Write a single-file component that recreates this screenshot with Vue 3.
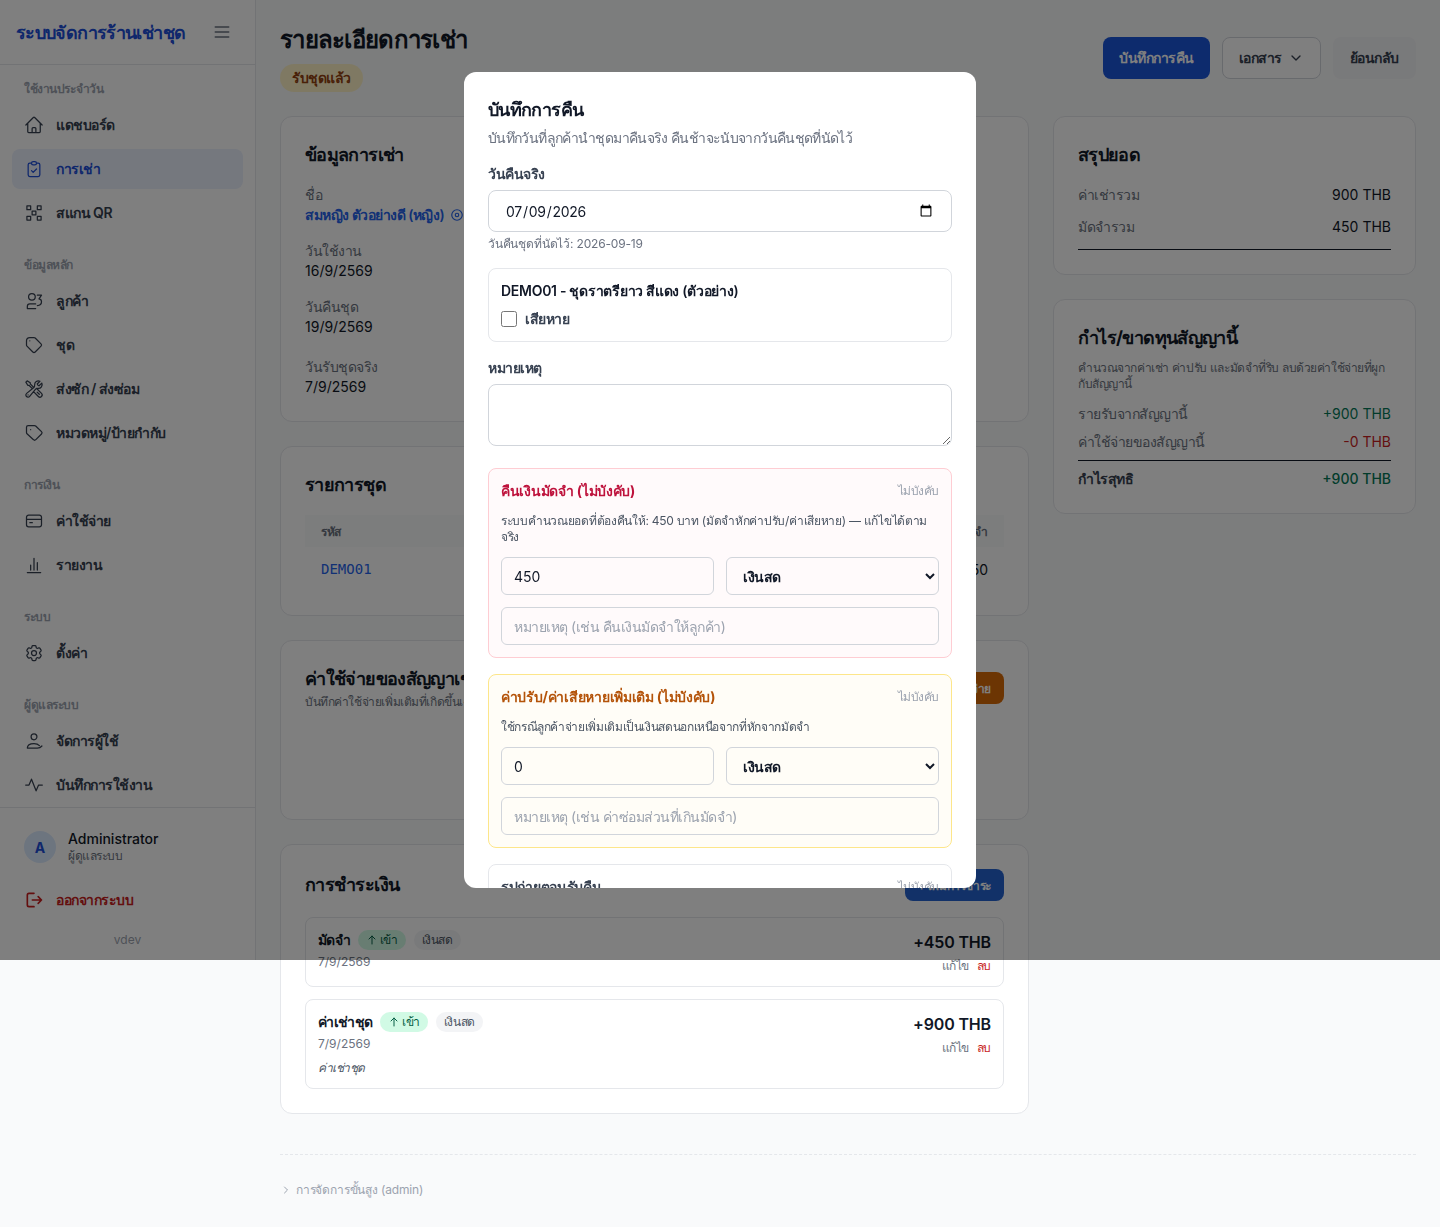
<template>
  <div class="layout">
    <aside class="sidebar">
      <div class="side-head">
        <span class="brand">ระบบจัดการร้านเช่าชุด</span>
        <svg class="menu-icon" viewBox="0 0 24 24" fill="none" stroke="currentColor" stroke-width="2" stroke-linecap="round"><path d="M4 6h16M4 12h16M4 18h16" /></svg>
      </div>
      <nav class="side-nav">
        <div v-for="group in navGroups" :key="group.title" class="nav-group">
          <div class="nav-title">{{ group.title }}</div>
          <a v-for="item in group.items" :key="item.label" class="nav-item" :class="{ active: item.active }">
            <svg viewBox="0 0 24 24" fill="none" stroke="currentColor" stroke-width="1.5" stroke-linecap="round" stroke-linejoin="round"><path :d="icons[item.icon]" /></svg>
            <span>{{ item.label }}</span>
          </a>
        </div>
      </nav>
      <div class="side-foot">
        <div class="user">
          <div class="avatar latin">A</div>
          <div>
            <div class="user-name latin">Administrator</div>
            <div class="user-role">ผู้ดูแลระบบ</div>
          </div>
        </div>
        <a class="logout">
          <svg viewBox="0 0 24 24" fill="none" stroke="currentColor" stroke-width="2" stroke-linecap="round" stroke-linejoin="round"><path d="M12 4H6a2 2 0 0 0-2 2v12a2 2 0 0 0 2 2h6M10 12h11M17 8l4 4-4 4" /></svg>
          <span>ออกจากระบบ</span>
        </a>
        <div class="version latin">vdev</div>
      </div>
    </aside>

    <main class="main">
      <header class="page-head">
        <div>
          <h1>รายละเอียดการเช่า</h1>
          <span class="status">รับชุดแล้ว</span>
        </div>
        <div class="head-actions">
          <button class="btn primary">บันทึกการคืน</button>
          <button class="btn outline">เอกสาร
            <svg viewBox="0 0 24 24" fill="none" stroke="currentColor" stroke-width="2" stroke-linecap="round" stroke-linejoin="round"><path d="m6 9 6 6 6-6" /></svg>
          </button>
          <button class="btn soft">ย้อนกลับ</button>
        </div>
      </header>

      <div class="columns">
        <div class="col">
          <section class="card">
            <h2>ข้อมูลการเช่า</h2>
            <div class="fields">
              <div class="field">
                <div class="f-label">ชื่อ</div>
                <div class="f-value link">สมหญิง ตัวอย่างดี (หญิง)
                  <svg viewBox="0 0 24 24" fill="none" stroke="currentColor" stroke-width="2"><circle cx="12" cy="12" r="9" /><circle cx="12" cy="12" r="3" /></svg>
                </div>
              </div>
              <div class="field">
                <div class="f-label">วันใช้งาน</div>
                <div class="f-value latin">16/9/2569</div>
              </div>
              <div class="field">
                <div class="f-label">วันคืนชุด</div>
                <div class="f-value latin">19/9/2569</div>
              </div>
              <div class="field last">
                <div class="f-label">วันรับชุดจริง</div>
                <div class="f-value latin">7/9/2569</div>
              </div>
            </div>
          </section>

          <section class="card">
            <h2>รายการชุด</h2>
            <table class="items">
              <thead>
                <tr><th>รหัส</th><th>ชื่อชุด</th><th class="num">ค่าเช่า</th><th class="num">มัดจำ</th></tr>
              </thead>
              <tbody>
                <tr>
                  <td class="code">DEMO01</td>
                  <td>ชุดราตรียาว สีแดง (ตัวอย่าง)</td>
                  <td class="num latin">900</td>
                  <td class="num latin">450</td>
                </tr>
              </tbody>
            </table>
          </section>

          <section class="card expense">
            <div class="card-head">
              <div>
                <h2>ค่าใช้จ่ายของสัญญาเช่านี้</h2>
                <p class="sub">บันทึกค่าใช้จ่ายเพิ่มเติมที่เกิดขึ้นเฉพาะกับสัญญานี้</p>
              </div>
              <button class="btn small orange">+ เพิ่มค่าใช้จ่าย</button>
            </div>
          </section>

          <section class="card">
            <div class="card-head center">
              <h2>การชำระเงิน</h2>
              <button class="btn small primary pay-btn">+ เพิ่มการชำระ</button>
            </div>
            <div class="payments">
              <div v-for="pay in payments" :key="pay.title" class="payment">
                <div>
                  <div class="pay-line">
                    <strong>{{ pay.title }}</strong>
                    <span class="tag in">
                      <svg viewBox="0 0 24 24" fill="none" stroke="currentColor" stroke-width="2" stroke-linecap="round" stroke-linejoin="round"><path d="M12 20V4M6 10l6-6 6 6" /></svg>
                      เข้า
                    </span>
                    <span class="tag grey">เงินสด</span>
                  </div>
                  <div class="pay-date latin">7/9/2569</div>
                  <div v-if="pay.note" class="pay-note">{{ pay.note }}</div>
                </div>
                <div class="pay-right">
                  <div class="pay-amount">{{ pay.amount }}</div>
                  <div class="pay-links"><a>แก้ไข</a><a class="del">ลบ</a></div>
                </div>
              </div>
            </div>
          </section>
        </div>

        <div class="col">
          <section class="card">
            <h2>สรุปยอด</h2>
            <div class="rows summary">
              <div class="row"><span class="muted">ค่าเช่ารวม</span><span class="latin">900 THB</span></div>
              <div class="row"><span class="muted">มัดจำรวม</span><span class="latin">450 THB</span></div>
            </div>
            <div class="rule"></div>
          </section>

          <section class="card">
            <h2>กำไร/ขาดทุนสัญญานี้</h2>
            <p class="sub profit-sub">คำนวณจากค่าเช่า ค่าปรับ และมัดจำที่ริบ ลบด้วยค่าใช้จ่ายที่ผูกกับสัญญานี้</p>
            <div class="rows profit">
              <div class="row"><span class="muted">รายรับจากสัญญานี้</span><span class="plus latin">+900 THB</span></div>
              <div class="row"><span class="muted">ค่าใช้จ่ายของสัญญานี้</span><span class="minus latin">-0 THB</span></div>
            </div>
            <div class="rule tight"></div>
            <div class="row"><span class="net">กำไรสุทธิ</span><span class="plus strong latin">+900 THB</span></div>
          </section>
        </div>
      </div>

      <footer class="admin">
        <div class="admin-toggle">
          <svg viewBox="0 0 24 24" fill="none" stroke="currentColor" stroke-width="2" stroke-linecap="round" stroke-linejoin="round"><path d="m9 6 6 6-6 6" /></svg>
          การจัดการขั้นสูง (admin)
        </div>
      </footer>
    </main>

    <div class="overlay">
      <div class="modal">
        <h3>บันทึกการคืน</h3>
        <p class="modal-desc">บันทึกวันที่ลูกค้านำชุดมาคืนจริง คืนช้าจะนับจากวันคืนชุดที่นัดไว้</p>

        <label class="m-label">วันคืนจริง</label>
        <input v-model="returnDate" class="control date" type="date" />
        <div class="hint">วันคืนชุดที่นัดไว้: 2026-09-19</div>

        <div class="box item-box">
          <div class="item-name">DEMO01 - ชุดราตรียาว สีแดง (ตัวอย่าง)</div>
          <label class="check"><input v-model="damaged" type="checkbox" /><span>เสียหาย</span></label>
        </div>

        <label class="m-label">หมายเหตุ</label>
        <textarea v-model="note" class="control area" rows="2"></textarea>

        <div class="box panel rose">
          <div class="panel-head"><span class="panel-title">คืนเงินมัดจำ (ไม่บังคับ)</span><span class="optional">ไม่บังคับ</span></div>
          <p class="panel-note">ระบบคำนวณยอดที่ต้องคืนให้: 450 บาท (มัดจำหักค่าปรับ/ค่าเสียหาย) — แก้ไขได้ตามจริง</p>
          <div class="pair">
            <input v-model="refund" class="control small-input latin" type="text" />
            <select class="control small-input picker"><option>เงินสด</option><option>โอนเงิน</option></select>
          </div>
          <input class="control small-input wide" type="text" placeholder="หมายเหตุ (เช่น คืนเงินมัดจำให้ลูกค้า)" />
        </div>

        <div class="box panel amber">
          <div class="panel-head"><span class="panel-title">ค่าปรับ/ค่าเสียหายเพิ่มเติม (ไม่บังคับ)</span><span class="optional">ไม่บังคับ</span></div>
          <p class="panel-note one">ใช้กรณีลูกค้าจ่ายเพิ่มเติมเป็นเงินสดนอกเหนือจากที่หักจากมัดจำ</p>
          <div class="pair">
            <input v-model="penalty" class="control small-input latin" type="text" />
            <select class="control small-input picker"><option>เงินสด</option><option>โอนเงิน</option></select>
          </div>
          <input class="control small-input wide" type="text" placeholder="หมายเหตุ (เช่น ค่าซ่อมส่วนที่เกินมัดจำ)" />
        </div>

        <div class="box panel plain">
          <div class="panel-head"><span class="panel-title dark">รูปถ่ายตอนรับคืน</span><span class="optional">ไม่บังคับ</span></div>
        </div>
      </div>
    </div>
  </div>
</template>

<script setup>
import { ref } from 'vue'

const returnDate = ref('2026-07-09')
const damaged = ref(false)
const note = ref('')
const refund = ref('450')
const penalty = ref('0')

const icons = {
  home: 'm2.25 12 8.954-8.955c.44-.439 1.152-.439 1.591 0L21.75 12M4.5 9.75v10.125c0 .621.504 1.125 1.125 1.125H9.75v-4.875c0-.621.504-1.125 1.125-1.125h2.25c.621 0 1.125.504 1.125 1.125V21h4.125c.621 0 1.125-.504 1.125-1.125V9.75M8.25 21h8.25',
  clipboard: 'M9 5H7a2 2 0 0 0-2 2v12a2 2 0 0 0 2 2h10a2 2 0 0 0 2-2V7a2 2 0 0 0-2-2h-2M9 5a2 2 0 0 0 2 2h2a2 2 0 0 0 2-2M9 5a2 2 0 0 1 2-2h2a2 2 0 0 1 2 2m-6 9 2 2 4-4',
  qr: 'M3.500 3.500H8V8H3.500zM16 3.500h4.500V8H16zM3.500 16H8v4.500H3.500zM16 16h4.500v4.500H16zM9.750 9.750h4.500v4.500h-4.500z',
  users: 'M13.500 7a4 4 0 1 1-8 0 4 4 0 0 1 8 0ZM14 15.500H7a3 3 0 0 0-3 3V21h10M16 5h5l-3 4.500a3.500 3.500 0 0 1 3 3.500c0 3-1.500 4.500-5 4.500',
  tag: 'M7 7h.01M7 3h5c.512 0 1.024.195 1.414.586l7 7a2 2 0 0 1 0 2.828l-7 7a2 2 0 0 1-2.828 0l-7-7A1.994 1.994 0 0 1 3 12V7a4 4 0 0 1 4-4z',
  tools: 'M11.42 15.17 17.25 21A2.652 2.652 0 0 0 21 17.25l-5.877-5.877M11.42 15.17l2.496-3.03c.317-.384.74-.626 1.208-.766M11.42 15.17l-4.655 5.653a2.548 2.548 0 1 1-3.586-3.586l6.837-5.63m5.108-.233c.55-.164 1.163-.188 1.743-.14a4.5 4.5 0 0 0 4.486-6.336l-3.276 3.277a3.004 3.004 0 0 1-2.25-2.25l3.276-3.276a4.5 4.5 0 0 0-6.336 4.486c.091 1.076-.071 2.264-.904 2.95l-.102.085m-1.745 1.437L5.909 7.5H4.5L2.25 3.75l1.5-1.5L7.5 4.5v1.409l4.26 4.26m-1.745 1.437 1.745-1.437m6.615 8.206L15.75 15.75M4.867 19.125h.008v.008h-.008v-.008Z',
  label: 'M5 3h7.500c.6 0 1.100.2 1.500.6l7 6.800c.8.8.8 2 0 2.800l-6.800 6.800c-.8.8-2 .8-2.800 0L3.600 13c-.4-.4-.6-.9-.6-1.500V5a2 2 0 0 1 2-2zM8 8h.01',
  wallet: 'M3 7.500A2.500 2.500 0 0 1 5.500 5h13A2.500 2.500 0 0 1 21 7.500v9a2.500 2.500 0 0 1-2.500 2.500h-13A2.500 2.500 0 0 1 3 16.500zM3 10h18M7 14h3',
  chart: 'M4 21h16M8 18v-6M12 18V4M16 18v-9',
  cog: 'M9.594 3.94c.09-.542.56-.94 1.110-.94h2.593c.55 0 1.020.398 1.110.94l.213 1.281c.063.374.313.686.645.87.074.04.147.083.22.127.325.196.72.257 1.075.124l1.217-.456a1.125 1.125 0 0 1 1.370.49l1.296 2.247a1.125 1.125 0 0 1-.26 1.431l-1.003.827c-.293.241-.438.613-.43.992a7.723 7.723 0 0 1 0 .255c-.008.378.137.75.43.991l1.004.827c.424.35.534.955.26 1.430l-1.298 2.247a1.125 1.125 0 0 1-1.369.491l-1.217-.456c-.355-.133-.75-.072-1.076.124a6.47 6.47 0 0 1-.22.128c-.331.183-.581.495-.644.869l-.213 1.281c-.09.543-.56.94-1.110.94h-2.594c-.55 0-1.019-.398-1.110-.94l-.213-1.281c-.062-.374-.312-.686-.644-.87a6.52 6.52 0 0 1-.22-.127c-.325-.196-.72-.257-1.076-.124l-1.217.456a1.125 1.125 0 0 1-1.369-.49l-1.297-2.247a1.125 1.125 0 0 1 .26-1.431l1.004-.827c.292-.24.437-.613.43-.991a6.932 6.932 0 0 1 0-.255c.007-.38-.138-.751-.43-.992l-1.004-.827a1.125 1.125 0 0 1-.26-1.430l1.297-2.247a1.125 1.125 0 0 1 1.370-.491l1.216.456c.356.133.751.072 1.076-.124.072-.044.146-.086.22-.128.332-.183.582-.495.644-.869l.214-1.280ZM15 12a3 3 0 1 1-6 0 3 3 0 0 1 6 0Z',
  user: 'M15.500 7a3.500 3.500 0 1 1-7 0 3.500 3.500 0 0 1 7 0ZM4 20.500c0-3.500 3-5.500 8-5.500 3 0 5 .8 6.500 2.500M4 20.500h12c2 0 4-.8 5.500-2.500',
  pulse: 'M2 12h4l3-7 5.500 14 3-7H22'
}

const navGroups = [
  {
    title: 'ใช้งานประจำวัน',
    items: [
      { label: 'แดชบอร์ด', icon: 'home' },
      { label: 'การเช่า', icon: 'clipboard', active: true },
      { label: 'สแกน QR', icon: 'qr' }
    ]
  },
  {
    title: 'ข้อมูลหลัก',
    items: [
      { label: 'ลูกค้า', icon: 'users' },
      { label: 'ชุด', icon: 'tag' },
      { label: 'ส่งซัก / ส่งซ่อม', icon: 'tools' },
      { label: 'หมวดหมู่/ป้ายกำกับ', icon: 'label' }
    ]
  },
  {
    title: 'การเงิน',
    items: [
      { label: 'ค่าใช้จ่าย', icon: 'wallet' },
      { label: 'รายงาน', icon: 'chart' }
    ]
  },
  {
    title: 'ระบบ',
    items: [{ label: 'ตั้งค่า', icon: 'cog' }]
  },
  {
    title: 'ผู้ดูแลระบบ',
    items: [
      { label: 'จัดการผู้ใช้', icon: 'user' },
      { label: 'บันทึกการใช้งาน', icon: 'pulse' }
    ]
  }
]

const payments = [
  { title: 'มัดจำ', amount: '+450 THB' },
  { title: 'ค่าเช่าชุด', amount: '+900 THB', note: 'ค่าเช่าชุด' }
]
</script>

<style scoped>
.layout {
  display: flex;
  align-items: flex-start;
  min-height: 1227px;
  background: #f9fafb;
  color: #111827;
}

/* thai fallback font runs wider than the original */
.layout * {
  letter-spacing: -0.035em;
}

.layout .latin {
  letter-spacing: 0;
}

/* sidebar */
.sidebar {
  width: 256px;
  height: 960px;
  flex-shrink: 0;
  box-sizing: border-box;
  display: flex;
  flex-direction: column;
  background: #fff;
  border-right: 1px solid #e5e7eb;
}

.side-head {
  height: 65px;
  flex-shrink: 0;
  box-sizing: border-box;
  display: flex;
  align-items: center;
  justify-content: space-between;
  padding: 0 23px 0 16px;
  border-bottom: 1px solid #e5e7eb;
}

.brand {
  font-size: 18px;
  font-weight: 700;
  color: #1d4ed8;
}

.menu-icon {
  width: 20px;
  height: 20px;
  color: #6b7280;
}

.side-nav {
  flex: 1;
  min-height: 0;
  padding: 16px 12px 0;
}

.nav-group {
  margin-bottom: 24px;
}

.nav-title {
  padding-left: 12px;
  margin-bottom: 8px;
  font-size: 12px;
  line-height: 16px;
  font-weight: 600;
  color: #9ca3af;
}

.nav-item {
  display: flex;
  align-items: center;
  gap: 12px;
  height: 40px;
  margin-bottom: 4px;
  padding: 0 12px;
  border-radius: 8px;
  font-size: 14px;
  font-weight: 600;
  color: #374151;
}

.nav-item:last-child {
  margin-bottom: 0;
}

.nav-item svg {
  width: 20px;
  height: 20px;
  flex-shrink: 0;
}

.nav-item.active {
  background: #eaf0fd;
  color: #1d4ed8;
}

.side-foot {
  flex-shrink: 0;
  border-top: 1px solid #e5e7eb;
  padding: 22px 12px 0;
  height: 153px;
  box-sizing: border-box;
}

.user {
  display: flex;
  align-items: center;
  gap: 12px;
  padding-left: 12px;
}

.avatar {
  width: 32px;
  height: 32px;
  border-radius: 50%;
  display: flex;
  align-items: center;
  justify-content: center;
  background: #dbeafe;
  color: #1d4ed8;
  font-size: 14px;
  font-weight: 700;
}

.user-name {
  font-size: 14px;
  line-height: 18px;
  font-weight: 500;
}

.user-role {
  font-size: 12px;
  line-height: 16px;
  color: #6b7280;
}

.logout {
  display: flex;
  align-items: center;
  gap: 12px;
  height: 40px;
  margin-top: 16px;
  padding-left: 12px;
  font-size: 14px;
  font-weight: 600;
  color: #c81e1e;
}

.logout svg {
  width: 20px;
  height: 20px;
}

.version {
  margin-top: 12px;
  text-align: center;
  font-size: 12px;
  line-height: 16px;
  color: #9ca3af;
}

/* main */
.main {
  flex: 1;
  min-width: 0;
  padding: 24px 24px 0;
}

.page-head {
  display: flex;
  align-items: center;
  justify-content: space-between;
  margin-bottom: 24px;
}

h1 {
  margin: 0 0 8px;
  font-size: 24px;
  line-height: 32px;
  font-weight: 700;
}

.layout h1 {
  letter-spacing: -0.03em;
}

.status {
  display: block;
  width: fit-content;
  padding: 0 12px;
  height: 28px;
  line-height: 27px;
  border-radius: 14px;
  background: #fef3c7;
  color: #92400e;
  font-size: 14px;
  font-weight: 600;
}

.head-actions {
  display: flex;
  gap: 12px;
}

.btn {
  display: inline-flex;
  align-items: center;
  justify-content: center;
  gap: 6px;
  height: 42px;
  padding: 0 16px;
  border: 1px solid transparent;
  border-radius: 8px;
  font: inherit;
  font-size: 14px;
  font-weight: 600;
}

.btn svg {
  width: 16px;
  height: 16px;
}

.btn.primary {
  padding: 0 15px;
  background: #1a56db;
  color: #fff;
}

.btn.pay-btn {
  background: #2563d0;
}

.btn.outline {
  background: #fff;
  border-color: #d1d5db;
  color: #374151;
}

.btn.soft {
  background: #f3f4f6;
  color: #374151;
}

.btn.small {
  height: 32px;
  padding: 0 12px;
  font-size: 12px;
  white-space: nowrap;
}

.btn.orange {
  background: #d96a06;
  color: #fff;
}

.columns {
  display: grid;
  grid-template-columns: 1fr 363px;
  gap: 24px;
  align-items: start;
}

.col {
  display: flex;
  flex-direction: column;
  gap: 24px;
  min-width: 0;
}

.card {
  padding: 24px;
  background: #fff;
  border: 1px solid #e5e7eb;
  border-radius: 12px;
}

h2 {
  margin: 0;
  font-size: 18px;
  line-height: 28px;
  font-weight: 700;
}

.fields {
  margin-top: 16px;
  font-size: 14px;
  line-height: 20px;
}

.field {
  margin-bottom: 16px;
}

.field.last {
  margin: 20px 0 0;
}

.f-label {
  color: #6b7280;
}

.f-value.link {
  display: flex;
  align-items: center;
  gap: 6px;
  color: #2563eb;
  font-weight: 600;
}

.f-value.link svg {
  width: 14px;
  height: 14px;
}

.items {
  width: 100%;
  margin-top: 16px;
  border-collapse: collapse;
  table-layout: fixed;
  font-size: 14px;
}

.items th {
  height: 32px;
  padding: 0 16px;
  background: #f9fafb;
  text-align: left;
  font-size: 12px;
  font-weight: 600;
  color: #6b7280;
}

.items td {
  height: 44px;
  padding: 0 16px;
}

.items .num {
  width: 90px;
  text-align: right;
}

.layout .items .code {
  font-family: 'DejaVu Sans Mono', monospace;
  color: #2563eb;
  font-size: 14px;
  letter-spacing: 0;
}

.expense {
  height: 180px;
  box-sizing: border-box;
}

.card-head {
  display: flex;
  align-items: flex-start;
  justify-content: space-between;
  gap: 16px;
}

.card-head.center {
  align-items: center;
}

.expense .btn {
  margin-top: 7px;
}

.expense .sub {
  margin-top: 1px;
}

.sub {
  margin: 0;
  font-size: 12px;
  line-height: 16px;
  color: #6b7280;
}

.payments {
  display: flex;
  flex-direction: column;
  gap: 12px;
  margin-top: 16px;
}

.payment {
  display: flex;
  justify-content: space-between;
  padding: 12px;
  border: 1px solid #e5e7eb;
  border-radius: 8px;
}

.pay-line {
  display: flex;
  align-items: center;
  gap: 8px;
  font-size: 14px;
  line-height: 20px;
}

.pay-line strong {
  font-weight: 700;
}

.layout .pay-line strong {
  letter-spacing: -0.05em;
}

.tag {
  display: inline-flex;
  align-items: center;
  gap: 2px;
  height: 20px;
  padding: 0 8px;
  border-radius: 10px;
  font-size: 12px;
}

.tag svg {
  width: 12px;
  height: 12px;
}

.tag.in {
  background: #d1fae5;
  color: #065f46;
}

.tag.grey {
  background: #f3f4f6;
  color: #4b5563;
}

.pay-date {
  margin-top: 4px;
  font-size: 12px;
  line-height: 16px;
  color: #6b7280;
}

.pay-note {
  margin-top: 8px;
  font-size: 12px;
  line-height: 16px;
  font-style: italic;
  color: #4b5563;
}

.pay-right {
  text-align: right;
}

.pay-amount {
  font-size: 16px;
  line-height: 24px;
  font-weight: 600;
}

.layout .pay-amount {
  letter-spacing: -0.01em;
}

.pay-links {
  display: flex;
  justify-content: flex-end;
  gap: 8px;
  margin-top: 4px;
  font-size: 12px;
  line-height: 16px;
  color: #6b7280;
}

.pay-links .del {
  color: #c81e1e;
}

.rows {
  display: flex;
  flex-direction: column;
  font-size: 14px;
  line-height: 20px;
}

.row {
  display: flex;
  justify-content: space-between;
  font-size: 14px;
  line-height: 20px;
}

.summary {
  gap: 12px;
  margin-top: 16px;
}

.muted {
  color: #6b7280;
}

.rule {
  height: 1px;
  margin-top: 12px;
  background: #111827;
}

.rule.tight {
  margin: 8px 0;
}

.profit-sub {
  margin-top: 8px;
}

.profit {
  gap: 8px;
  margin-top: 12px;
}

.plus {
  color: #047857;
}

.plus.strong {
  font-weight: 500;
}

.minus {
  color: #c81e1e;
}

.net {
  font-weight: 600;
  color: #374151;
}

.admin {
  margin-top: 40px;
  padding-top: 23px;
  border-top: 1px dashed #e5e7eb;
}

.admin-toggle {
  display: flex;
  align-items: center;
  gap: 4px;
  font-size: 12px;
  line-height: 24px;
  color: #9ca3af;
}

.layout .admin-toggle {
  letter-spacing: -0.015em;
}

.admin-toggle svg {
  width: 12px;
  height: 12px;
}

/* modal */
.overlay {
  position: fixed;
  top: 0;
  left: 0;
  right: 0;
  height: 960px;
  display: flex;
  align-items: center;
  justify-content: center;
  background: rgba(0, 0, 0, 0.5);
}

.modal {
  width: 512px;
  height: 816px;
  box-sizing: border-box;
  padding: 24px;
  overflow: hidden;
  background: #fff;
  border-radius: 12px;
}

h3 {
  margin: 0 0 4px;
  font-size: 18px;
  line-height: 28px;
  font-weight: 700;
}

.modal-desc {
  margin: 0 0 16px;
  font-size: 14px;
  line-height: 20px;
  color: #6b7280;
}

.layout .modal-desc {
  letter-spacing: -0.045em;
}

.m-label {
  display: block;
  margin-bottom: 6px;
  font-size: 14px;
  line-height: 20px;
  font-weight: 600;
  color: #374151;
}

.control {
  box-sizing: border-box;
  font-family: inherit;
  font-size: 14px;
  color: #111827;
  background: transparent;
  border: 1px solid #d1d5db;
  outline: none;
}

.control::placeholder {
  color: #9ca3af;
}

.layout .date {
  display: block;
  width: 100%;
  height: 42px;
  padding: 0 16px;
  border-radius: 8px;
  letter-spacing: -0.02em;
}

.hint {
  margin-top: 4px;
  font-size: 12px;
  line-height: 16px;
  color: #6b7280;
}

.layout .hint {
  letter-spacing: -0.015em;
}

.box {
  box-sizing: border-box;
  padding: 12px;
  border: 1px solid #e5e7eb;
  border-radius: 8px;
}

.item-box {
  height: 74px;
  margin: 16px 0;
}

.item-name {
  font-size: 14px;
  line-height: 20px;
  font-weight: 600;
}

.layout .item-name {
  letter-spacing: -0.02em;
}

.check {
  display: flex;
  align-items: center;
  gap: 8px;
  margin-top: 8px;
  font-size: 14px;
  line-height: 20px;
  font-weight: 600;
  color: #374151;
}

.check input {
  width: 16px;
  height: 16px;
  margin: 0;
}

.area {
  display: inline-block;
  width: 100%;
  height: 62px;
  padding: 8px 12px;
  border-radius: 8px;
}

.panel {
  margin-top: 16px;
}

.panel.rose {
  margin-top: 18px;
  border-color: #fecdd3;
  background: #fffafb;
}

.panel.amber {
  border-color: #fde68a;
  background: #fffdf7;
}

.panel-head {
  display: flex;
  justify-content: space-between;
  font-size: 14px;
  line-height: 20px;
}

.panel-title {
  font-weight: 700;
}

.layout .panel-title {
  letter-spacing: -0.02em;
}

.rose .panel-title {
  color: #be123c;
}

.amber .panel-title {
  color: #b45309;
}

.panel-title.dark {
  color: #374151;
}

.optional {
  font-size: 12px;
  color: #9ca3af;
}

.panel-note {
  margin: 12px 0;
  font-size: 12px;
  line-height: 16px;
  color: #4b5563;
}

.layout .panel-note {
  letter-spacing: -0.024em;
}

.layout .panel-note.one {
  letter-spacing: -0.03em;
}

.pair {
  display: grid;
  grid-template-columns: 1fr 1fr;
  gap: 12px;
}

.small-input {
  width: 100%;
  height: 38px;
  padding: 0 12px;
  border-radius: 6px;
}

.picker {
  font-weight: 600;
}

.wide {
  display: block;
  margin-top: 12px;
}
</style>

<style>
body {
  margin: 0;
  font-family: Inter, 'Noto Sans', 'Liberation Sans', sans-serif;
  background: #f9fafb;
}
</style>
